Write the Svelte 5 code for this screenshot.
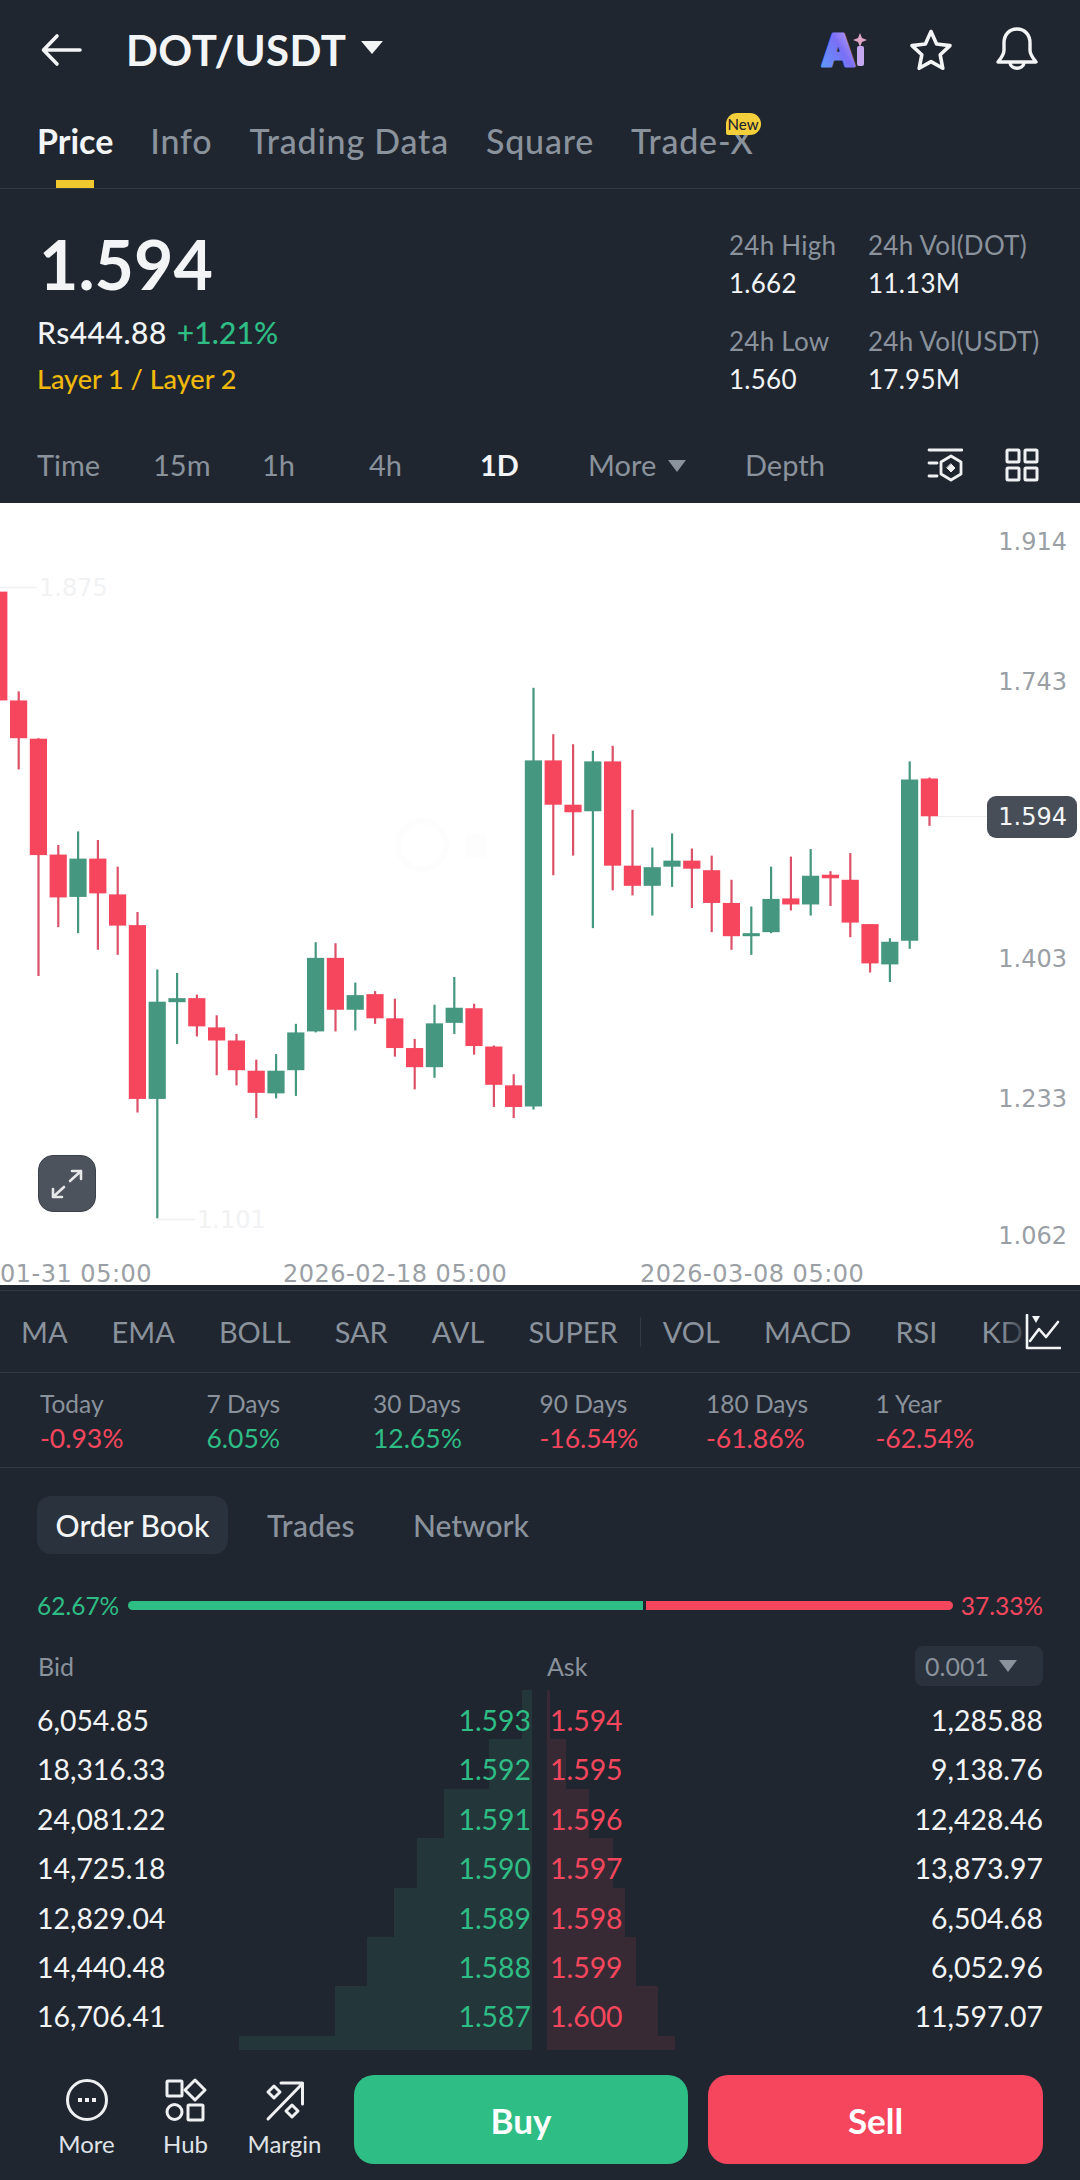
<script>
  // candles: [up, wickTop, bodyTop, bodyBottom, wickBottom] in page y
  const raw = [
    [0,155,162,378,440],[0,360,378,453,515],[0,453,454,685,925],[0,665,684,769,828],
    [1,638,692,768,840],[0,655,692,761,873],[0,708,763,825,883],[0,798,824,1169,1196],
    [1,912,976,1169,1406],[1,919,969,977,1060],[0,962,969,1025,1045],[0,1003,1027,1053,1122],
    [0,1040,1053,1112,1142],[0,1091,1113,1157,1207],[1,1080,1113,1158,1168],[1,1020,1037,1112,1163],
    [1,858,889,1035,1037],[0,860,889,992,1035],[1,938,963,992,1033],[0,955,961,1009,1020],
    [0,970,1009,1068,1085],[0,1050,1068,1106,1150],[1,982,1019,1106,1127],[1,927,988,1018,1040],
    [0,980,989,1064,1081],[0,1063,1065,1141,1185],[0,1120,1142,1185,1207],[1,353,497,1184,1190],
    [0,445,497,585,725],[0,465,585,600,686],[1,478,499,598,830],[0,468,499,706,755],
    [0,595,706,746,765],[1,670,709,746,805],[1,642,696,708,748],[0,672,696,712,790],
    [0,686,715,780,838],[0,734,780,846,873],[1,787,840,846,883],[1,708,772,838,840],
    [0,688,771,783,795],[1,673,726,783,805],[0,717,724,731,786],[0,681,734,819,848],
    [0,822,822,900,918],[1,850,857,902,937],[1,499,535,855,871],[0,531,533,608,627],
  ];
  const py = (v) => 510 + v / 1.985 - 503;
  const candles = raw.map((c, i) => ({
    up: c[0] === 1,
    x: -1.2 + i * 19.8,
    top: py(c[1]),
    bodyTop: py(c[2]),
    bodyH: Math.max(py(c[3]) - py(c[2]), 3),
    bottom: py(c[4]),
  }));

  const axis = [
    { label: "1.914", y: 38 },
    { label: "1.743", y: 178 },
    { label: "1.403", y: 455 },
    { label: "1.233", y: 595 },
    { label: "1.062", y: 732 },
  ];

  const tabs = ["Price", "Info", "Trading Data", "Square", "Trade-X"];
  const ranges = ["Time", "15m", "1h", "4h", "1D"];
  const mainInd = ["MA", "EMA", "BOLL", "SAR", "AVL", "SUPER"];
  const subInd = ["VOL", "MACD", "RSI", "KD"];
  const stats = [
    { label: "Today", value: "-0.93%", up: false },
    { label: "7 Days", value: "6.05%", up: true },
    { label: "30 Days", value: "12.65%", up: true },
    { label: "90 Days", value: "-16.54%", up: false },
    { label: "180 Days", value: "-61.86%", up: false },
    { label: "1 Year", value: "-62.54%", up: false },
  ];
  const book = [
    { bid: "6,054.85", bp: "1.593", ap: "1.594", ask: "1,285.88", bw: 10, aw: 3 },
    { bid: "18,316.33", bp: "1.592", ap: "1.595", ask: "9,138.76", bw: 43, aw: 19 },
    { bid: "24,081.22", bp: "1.591", ap: "1.596", ask: "12,428.46", bw: 88, aw: 42 },
    { bid: "14,725.18", bp: "1.590", ap: "1.597", ask: "13,873.97", bw: 115, aw: 66 },
    { bid: "12,829.04", bp: "1.589", ap: "1.598", ask: "6,504.68", bw: 138, aw: 78 },
    { bid: "14,440.48", bp: "1.588", ap: "1.599", ask: "6,052.96", bw: 165, aw: 89 },
    { bid: "16,706.41", bp: "1.587", ap: "1.600", ask: "11,597.07", bw: 197, aw: 111 },
    { bid: "", bp: "", ap: "", ask: "", bw: 293, aw: 128 },
  ];
</script>

<div class="page">
  <header class="top">
    <svg class="back" width="44" height="36" viewBox="0 0 44 36" fill="none" stroke="#f2f4f6" stroke-width="3.6" stroke-linecap="round" stroke-linejoin="round">
      <path d="M40 18H4M17 4 3.5 18 17 32" />
    </svg>
    <span class="pair">DOT/USDT</span>
    <span class="caret big"></span>
    <div class="top-icons">
      <svg width="48" height="44" viewBox="0 0 48 44">
        <defs>
          <linearGradient id="aiGrad" x1="0" y1="1" x2="1" y2="0">
            <stop offset="0" stop-color="#5aa0ff" />
            <stop offset="0.55" stop-color="#7a6ff5" />
            <stop offset="1" stop-color="#d9b4ee" />
          </linearGradient>
        </defs>
        <text x="1.5" y="38" class="ai" fill="url(#aiGrad)" stroke="url(#aiGrad)" stroke-width="3" stroke-linejoin="round">A</text>
        <rect x="37" y="18" width="7" height="20" rx="2" fill="#c5a8f0" />
        <path d="M40 5 42 10 47 12 42 14 40 19 38 14 33 12 38 10Z" fill="#e0a6c8" />
      </svg>
      <svg class="star" width="44" height="44" viewBox="0 0 44 44" fill="none" stroke="#f2f4f6" stroke-width="3.6" stroke-linejoin="round">
        <path d="M22 3.5 27.6 16 41 17.6 31.2 26.8 33.8 40.3 22 33.6 10.2 40.3 12.8 26.8 3 17.6 16.4 16Z" />
      </svg>
      <svg width="46" height="48" viewBox="0 0 46 48" fill="none" stroke="#f2f4f6" stroke-width="3.4" stroke-linecap="round" stroke-linejoin="round">
        <path d="M10 24V17C10 9 15 3 23 3S36 9 36 17V24C36 29 39 32 42 36H4C7 32 10 29 10 24Z" />
        <path d="M16 37C17 44 29 44 30 37" />
      </svg>
    </div>
  </header>

  <nav class="tabs">
    {#each tabs as t, i}
      <span class="tab" class:on={i === 0}>
        {t}
        {#if t === "Trade-X"}<em class="new">New</em>{/if}
      </span>
    {/each}
  </nav>

  <section class="summary">
    <div class="sum-left">
      <div class="last">1.594</div>
      <div class="fiat">Rs444.88<span class="green">+1.21%</span></div>
      <div class="cat">Layer 1 / Layer 2</div>
    </div>
    <div class="sum-right">
      <div><span class="k">24h High</span><span class="v">1.662</span></div>
      <div><span class="k">24h Vol(DOT)</span><span class="v">11.13M</span></div>
      <div><span class="k">24h Low</span><span class="v">1.560</span></div>
      <div><span class="k">24h Vol(USDT)</span><span class="v">17.95M</span></div>
    </div>
  </section>

  <div class="ranges">
    {#each ranges as r}
      <span class:on={r === "1D"}>{r}</span>
    {/each}
    <span class="more">More <i class="caret small"></i></span>
    <span>Depth</span>
    <svg class="r-ic" width="36" height="36" viewBox="0 0 36 36" fill="none" stroke="#eef0f2" stroke-width="2.8" stroke-linecap="round" stroke-linejoin="round">
      <path d="M2 3H35M2 16H10M2 29H10" />
      <path d="M24 9 34 15V27L24 33 14 27V15Z" />
      <path d="M24 17 28 21 24 25 20 21Z" fill="#eef0f2" stroke-width="1" />
    </svg>
    <svg class="r-ic grid" width="34" height="34" viewBox="0 0 34 34" fill="none" stroke="#eef0f2" stroke-width="3">
      <rect x="2" y="2" width="12" height="12" rx="1" /><rect x="20" y="2" width="12" height="12" rx="1" />
      <rect x="2" y="20" width="12" height="12" rx="1" /><rect x="20" y="20" width="12" height="12" rx="1" />
    </svg>
  </div>

  <div class="chart">
    <svg width="1080" height="782" viewBox="0 0 1080 782">
      <circle cx="422" cy="342" r="24" fill="none" stroke="#fdfdfd" stroke-width="6" />
      <rect x="466" y="330" width="20" height="24" fill="#fdfdfd" />

      <path d="M0 84.5H37M157 716.5H195" stroke="#eef0f1" stroke-width="1.5" />
      <text class="mark" x="39" y="93">1.875</text>
      <text class="mark" x="197" y="725">1.101</text>

      {#each candles as c}
        <rect x={c.x - 1} y={c.top} width="2.2" height={c.bottom - c.top} fill={c.up ? "#45977f" : "#dc5068"} />
        <rect x={c.x - 8.6} y={c.bodyTop} width="17.2" height={c.bodyH} fill={c.up ? "#45977f" : "#f6465d"} />
      {/each}

      {#each axis as a}
        <text class="tick" x="1067" y={a.y + 9} text-anchor="end">{a.label}</text>
      {/each}

      <path d="M938 313.5H987" stroke="#efefef" stroke-width="1" />
      <rect x="987" y="293" width="90" height="42" rx="9" fill="#474e58" />
      <text class="tag" x="1067" y="322" text-anchor="end">1.594</text>

      <text class="date" x="0" y="779">01-31 05:00</text>
      <text class="date" x="283" y="779">2026-02-18 05:00</text>
      <text class="date" x="640" y="779">2026-03-08 05:00</text>
    </svg>
    <button class="expand" aria-label="Expand">
      <svg width="34" height="34" viewBox="0 0 34 34" fill="none" stroke="#e6e8ea" stroke-width="2.6" stroke-linecap="round" stroke-linejoin="round">
        <path d="M20 14 31 4M22 4H31V12M14 20 3 30M3 22V30H12" />
      </svg>
    </button>
  </div>

  <div class="inds">
    {#each mainInd as m}<span>{m}</span>{/each}
    <b class="sep"></b>
    {#each subInd as m}<span>{m}</span>{/each}
    <div class="fade">
      <svg width="36" height="36" viewBox="0 0 36 36" fill="none" stroke="#f2f4f6" stroke-width="2.6" stroke-linejoin="round" stroke-linecap="round">
        <path d="M2 1V34H35" />
        <path d="M5 27 14 15 21 23 33 8" />
        <path d="M7 2H15L11 9Z" fill="#f2f4f6" stroke="none" />
      </svg>
    </div>
  </div>

  <div class="stats">
    {#each stats as s}
      <div>
        <span class="s-k">{s.label}</span>
        <span class={s.up ? "green" : "red"}>{s.value}</span>
      </div>
    {/each}
  </div>

  <section class="book">
    <div class="b-tabs">
      <span class="pill">Order Book</span>
      <span class="trades">Trades</span>
      <span>Network</span>
    </div>

    <div class="ratio">
      <span class="green">62.67%</span>
      <div class="bar"><i class="g"></i><i class="r"></i></div>
      <span class="red">37.33%</span>
    </div>

    <div class="b-head">
      <span class="bid-h">Bid</span>
      <span class="ask-h">Ask</span>
      <span class="tick-size">0.001 <i class="caret small"></i></span>
    </div>

    <div class="rows">
      {#each book as row}
        <div class="row">
          <i class="depth d-bid" style="width: {row.bw}px"></i>
          <i class="depth d-ask" style="width: {row.aw}px"></i>
          <span class="amt">{row.bid}</span>
          <span class="green bp">{row.bp}</span>
          <span class="red ap">{row.ap}</span>
          <span class="amt end">{row.ask}</span>
        </div>
      {/each}
    </div>
  </section>

  <footer class="actions">
    <div class="act">
      <svg width="44" height="44" viewBox="0 0 44 44" fill="none" stroke="#eef0f2" stroke-width="3">
        <circle cx="22" cy="22" r="19.5" />
        <path d="M13 22H17M20 22H24M27 22H31" stroke-width="4" />
      </svg>
      <span>More</span>
    </div>
    <div class="act">
      <svg width="44" height="44" viewBox="0 0 44 44" fill="none" stroke="#eef0f2" stroke-width="3">
        <rect x="3" y="3" width="15" height="15" rx="1" />
        <path d="M31 2 41 12 31 22 21 12Z" stroke-linejoin="round" />
        <circle cx="10.5" cy="34" r="7.5" />
        <rect x="24" y="27" width="15" height="15" rx="1" />
      </svg>
      <span>Hub</span>
    </div>
    <div class="act">
      <svg width="44" height="44" viewBox="0 0 44 44" fill="none" stroke="#eef0f2" stroke-width="3" stroke-linecap="round" stroke-linejoin="round">
        <path d="M5 41 39 6M18 5H39.5V26" />
        <path d="M11 8 17 14 11 20 5 14Z" />
        <path d="M29 27 35 33 29 39 23 33Z" />
      </svg>
      <span>Margin</span>
    </div>
    <button class="trade buy">Buy</button>
    <button class="trade sell">Sell</button>
  </footer>
</div>

<style>
  :global(body) {
    margin: 0;
    background: #1f2630;
  }

  .page {
    width: 1080px;
    height: 2180px;
    overflow: hidden;
    background: #1f2630;
    color: #f2f4f6;
    font-family: Lato, "Noto Sans", sans-serif;
  }

  .green {
    color: #2ebd85;
  }

  .red {
    color: #f6465d;
  }

  .caret {
    display: inline-block;
    border-style: solid;
    border-color: #f2f4f6 transparent transparent;
  }

  .caret.big {
    border-width: 13px 11px 0;
    margin: -6px 0 0 15px;
  }

  .caret.small {
    border-width: 12px 9px 0;
    border-top-color: #8a929c;
    margin-left: 4px;
    vertical-align: 4px;
  }

  .top {
    display: flex;
    align-items: center;
    height: 100px;
    padding: 0 40px;
    box-sizing: border-box;
  }

  .back {
    margin-right: 42px;
  }

  .pair {
    font-size: 42px;
    font-weight: 700;
    letter-spacing: 0.4px;
  }

  .top-icons {
    display: flex;
    align-items: center;
    gap: 41px;
    margin-left: auto;
  }

  .tabs {
    display: flex;
    gap: 37px;
    height: 88px;
    padding: 0 37px;
    align-items: flex-start;
    border-bottom: 1px solid #323a46;
    font-size: 34px;
    font-weight: 500;
    letter-spacing: 0.8px;
    color: #8a929c;
  }

  .tab {
    position: relative;
    height: 88px;
    line-height: 82px;
    white-space: nowrap;
  }

  .tab.on {
    color: #f2f4f6;
    font-weight: 700;
    letter-spacing: 0;
  }

  .tab.on::after {
    content: "";
    position: absolute;
    left: 19px;
    right: 19px;
    bottom: 0;
    height: 8px;
    background: #f0c92e;
  }

  .new {
    position: absolute;
    right: -7px;
    top: 13px;
    width: 35px;
    height: 22px;
    border-radius: 11px 11px 11px 2px;
    background: #f5cf3b;
    color: #1f2630;
    font-size: 15px;
    font-style: normal;
    font-weight: 500;
    letter-spacing: 0;
    line-height: 22px;
    text-align: center;
  }

  .summary {
    display: flex;
    justify-content: space-between;
    height: 237px;
    padding: 0 37px;
  }

  .sum-left {
    padding-top: 45px;
  }

  .last {
    font-size: 68px;
    font-weight: 700;
    line-height: 60px;
    margin-left: 2px;
  }

  .fiat {
    display: flex;
    gap: 10px;
    margin-top: 20px;
    font-size: 30px;
    font-weight: 500;
    letter-spacing: 0.5px;
    line-height: 36px;
  }

  .fiat .green {
    letter-spacing: 0.1px;
  }

  .cat {
    margin-top: 11px;
    color: #f0b90b;
    font-size: 27px;
    font-weight: 500;
    line-height: 36px;
  }

  .sum-right {
    display: grid;
    grid-template-columns: 139px 175px;
    grid-auto-rows: 96px;
    padding-top: 38px;
  }

  .sum-right .k,
  .sum-right .v {
    display: block;
    font-size: 26px;
    letter-spacing: 0.25px;
    line-height: 36px;
  }

  .sum-right .k {
    color: #8a929c;
    margin-bottom: 2px;
  }

  .ranges {
    display: grid;
    grid-template-columns: 116px 109px 107px 111px 108px 157px 182px 78px 34px;
    align-items: center;
    height: 77px;
    padding-left: 37px;
    box-sizing: border-box;
    color: #8a929c;
    font-size: 29px;
  }

  .ranges .on {
    color: #f2f4f6;
    font-weight: 700;
  }

  .chart {
    position: relative;
    height: 782px;
    background: #fff;
    overflow: hidden;
  }

  .chart svg {
    display: block;
  }

  .tick,
  .tag,
  .date,
  .mark {
    font-family: "DejaVu Sans", sans-serif;
    font-size: 24px;
  }

  .tick,
  .date {
    fill: #9a9fa5;
  }

  .date {
    letter-spacing: 0.5px;
  }

  .mark {
    fill: #f1f2f3;
  }

  .tag {
    fill: #f4f5f6;
  }

  .ai {
    font-family: Inter, sans-serif;
    font-size: 44px;
    font-weight: 800;
  }

  .expand {
    position: absolute;
    left: 38px;
    top: 652px;
    width: 58px;
    height: 57px;
    padding: 0;
    border: 1.5px solid #3a414b;
    border-radius: 15px;
    background: #4c535d;
    display: flex;
    align-items: center;
    justify-content: center;
  }

  .inds {
    position: relative;
    display: flex;
    align-items: center;
    gap: 44px;
    height: 83px;
    margin-top: 5px;
    padding-left: 21px;
    border-top: 1px solid #323a46;
    border-bottom: 1px solid #323a46;
    box-sizing: border-box;
    color: #8a929c;
    font-size: 29px;
    overflow: hidden;
    white-space: nowrap;
  }

  .sep {
    width: 1px;
    height: 30px;
    margin: 0 -22px;
    background: #323a46;
  }

  .fade {
    position: absolute;
    right: 0;
    top: 0;
    bottom: 0;
    width: 80px;
    padding-right: 19px;
    box-sizing: border-box;
    display: flex;
    align-items: center;
    justify-content: flex-end;
    background: linear-gradient(90deg, rgba(31, 38, 48, 0), #1f2630 40%);
  }

  .stats {
    display: grid;
    grid-template-columns: repeat(6, 166.5px);
    height: 95px;
    padding: 14px 0 0 40px;
    border-bottom: 1px solid #323a46;
    box-sizing: border-box;
  }

  .stats span {
    display: block;
    line-height: 34px;
    font-size: 26.5px;
  }

  .stats .s-k {
    color: #8a929c;
    font-size: 24.5px;
  }

  .stats div:last-child {
    margin-left: 3px;
  }

  .book {
    height: 582px;
    overflow: hidden;
  }

  .b-tabs {
    display: flex;
    align-items: center;
    gap: 39px;
    height: 58px;
    margin-top: 28px;
    padding-left: 37px;
    color: #8a929c;
    font-size: 30px;
    font-weight: 500;
  }

  .pill {
    width: 191px;
    height: 58px;
    border-radius: 14px;
    background: #2a323d;
    color: #f2f4f6;
    line-height: 58px;
    text-align: center;
  }

  .trades {
    margin-right: 19px;
    letter-spacing: 0.3px;
  }

  .ratio {
    display: flex;
    align-items: center;
    justify-content: space-between;
    height: 36px;
    margin-top: 33px;
    padding: 0 37px;
    font-size: 24.5px;
  }

  .bar {
    display: flex;
    gap: 3px;
    width: 825px;
  }

  .bar i {
    height: 9px;
  }

  .bar .g {
    width: 515px;
    background: #2ebd85;
    border-radius: 5px 0 0 5px;
  }

  .bar .r {
    flex: 1;
    background: #f6465d;
    border-radius: 0 5px 5px 0;
  }

  .b-head {
    display: flex;
    align-items: center;
    height: 40px;
    margin-top: 23px;
    padding: 0 37px 0 38px;
    color: #8a929c;
    font-size: 25px;
  }

  .ask-h {
    margin-left: 473px;
  }

  .tick-size {
    width: 128px;
    height: 40px;
    margin-left: auto;
    border-radius: 8px;
    background: #2a323d;
    box-sizing: border-box;
    padding-left: 10px;
    line-height: 40px;
  }

  .rows {
    margin-top: 4px;
  }

  .row {
    position: relative;
    display: grid;
    grid-template-columns: 190px 304px 19px 100px 1fr;
    height: 49.4px;
    padding: 10px 37px 0 37px;
    box-sizing: border-box;
    font-size: 28.4px;
    line-height: 40px;
    white-space: nowrap;
  }

  .row span {
    position: relative;
  }

  .bp {
    text-align: right;
  }

  .ap {
    grid-column: 4;
  }

  .end {
    text-align: right;
  }

  .depth {
    position: absolute;
    top: 0;
    bottom: 0;
  }

  .d-bid {
    right: 548px;
    background: #233639;
  }

  .d-ask {
    left: 547px;
    background: #372a35;
  }

  .actions {
    display: grid;
    grid-template-columns: 99px 99px 99px 334px 335px;
    height: 130px;
    padding: 25px 0 0 37px;
    box-sizing: border-box;
    position: relative;
    background: #1f2630;
  }

  .act {
    display: flex;
    flex-direction: column;
    align-items: center;
    padding-top: 3px;
    font-size: 24px;
    color: #dfe2e6;
  }

  .act span {
    margin-top: 5px;
    line-height: 34px;
  }

  .trade {
    height: 89px;
    border: 0;
    border-radius: 20px;
    color: #fff;
    font-family: Lato, sans-serif;
    font-size: 35px;
    font-weight: 700;
  }

  .buy {
    margin-left: 20px;
    width: 334px;
    background: #2ebd85;
  }

  .sell {
    margin-left: 40px;
    width: 335px;
    background: #f6465d;
  }
</style>
